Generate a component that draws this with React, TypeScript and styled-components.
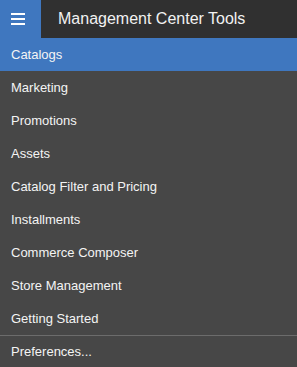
import React from 'react';
import styled, { createGlobalStyle } from 'styled-components';

const GlobalStyle = createGlobalStyle`
  html, body {
    margin: 0;
    padding: 0;
    background: #474747;
  }
  body {
    font-family: 'Liberation Sans', Arial, sans-serif;
  }
`;

const items = [
  'Catalogs',
  'Marketing',
  'Promotions',
  'Assets',
  'Catalog Filter and Pricing',
  'Installments',
  'Commerce Composer',
  'Store Management',
  'Getting Started'
];

const App = () => {
  return (
    <>
      <GlobalStyle />
      <Panel>
        <Header>
          <MenuButton aria-label="menu">
            <Bar />
            <Bar />
            <Bar />
          </MenuButton>
          <Title>Management Center Tools</Title>
        </Header>
        <Menu>
          {items.map((item, index) => (
            <Item key={item} active={index === 0}>
              {item}
            </Item>
          ))}
        </Menu>
        <Divider />
        <Item active={false}>Preferences...</Item>
      </Panel>
    </>
  );
};

const Panel = styled.div`
  width: 297px;
  height: 367px;
  background: #474747;
  display: flex;
  flex-direction: column;
  overflow: hidden;
`;

const Header = styled.div`
  display: flex;
  align-items: center;
  height: 38px;
  background: #303030;
`;

const MenuButton = styled.div`
  width: 41px;
  height: 38px;
  background: #3f77bf;
  display: flex;
  flex-direction: column;
  justify-content: center;
  gap: 3px;
  padding-left: 11px;
  box-sizing: border-box;
`;

const Bar = styled.span`
  display: block;
  width: 14px;
  height: 2px;
  background: #ffffff;
`;

const Title = styled.div`
  margin-left: 17px;
  color: #f2f2f2;
  font-size: 16px;
`;

const Menu = styled.div`
  display: flex;
  flex-direction: column;
`;

const Item = styled.div<{ active: boolean }>`
  height: 33px;
  display: flex;
  align-items: center;
  padding-left: 11px;
  font-size: 13px;
  color: #f4f4f4;
  background: ${(props) => (props.active ? '#3f77bf' : 'transparent')};
`;

const Divider = styled.div`
  height: 1px;
  background: #6c6c6c;
  margin-bottom: 1px;
`;

export default App;
